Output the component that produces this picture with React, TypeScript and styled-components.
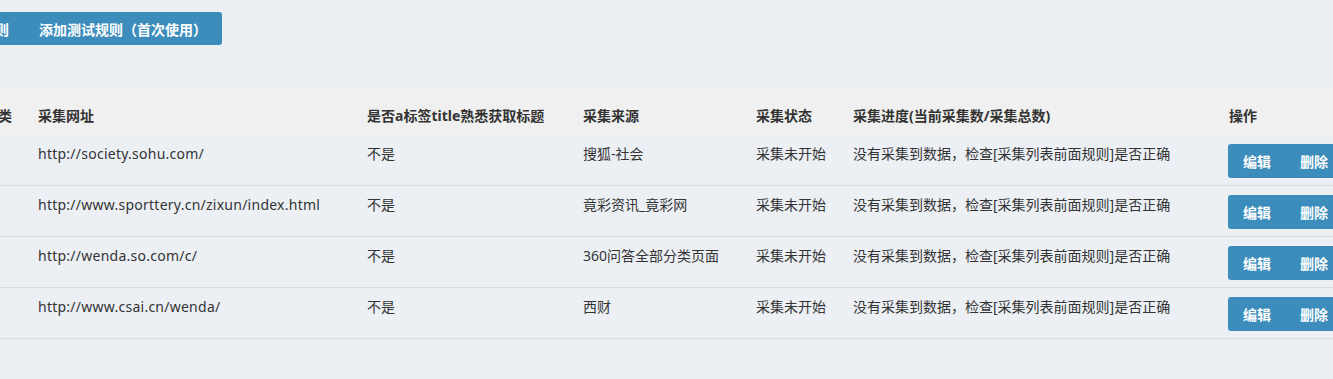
import React from 'react';
import styled, { createGlobalStyle } from 'styled-components';

interface Rule {
	id: number;
	url: string;
	useTitle: string;
	source: string;
	status: string;
	progress: string;
}

const rules: Rule[] = [
	{
		id: 1,
		url: 'http://society.sohu.com/',
		useTitle: '不是',
		source: '搜狐-社会',
		status: '采集未开始',
		progress: '没有采集到数据，检查[采集列表前面规则]是否正确',
	},
	{
		id: 2,
		url: 'http://www.sporttery.cn/zixun/index.html',
		useTitle: '不是',
		source: '竟彩资讯_竟彩网',
		status: '采集未开始',
		progress: '没有采集到数据，检查[采集列表前面规则]是否正确',
	},
	{
		id: 3,
		url: 'http://wenda.so.com/c/',
		useTitle: '不是',
		source: '360问答全部分类页面',
		status: '采集未开始',
		progress: '没有采集到数据，检查[采集列表前面规则]是否正确',
	},
	{
		id: 4,
		url: 'http://www.csai.cn/wenda/',
		useTitle: '不是',
		source: '西财',
		status: '采集未开始',
		progress: '没有采集到数据，检查[采集列表前面规则]是否正确',
	},
];

const GlobalStyle = createGlobalStyle`
	html, body {
		margin: 0;
		padding: 0;
		background: #ecf0f5;
	}
	body {
		font-family: 'Noto Sans', 'Noto Sans CJK SC', sans-serif;
		font-size: 14px;
		color: #333;
	}
`;

const App = () => {
	return (
		<>
			<GlobalStyle />
			<Viewport>
				<Sheet>
					<Toolbar>
						<ToolButton>新增采集规则</ToolButton>
						<ToolButton>添加测试规则（首次使用）</ToolButton>
					</Toolbar>
					<Table>
						<colgroup>
							<col style={{ width: 76 }} />
							<col style={{ width: 54 }} />
							<col style={{ width: 329 }} />
							<col style={{ width: 216 }} />
							<col style={{ width: 173 }} />
							<col style={{ width: 97 }} />
							<col style={{ width: 376 }} />
							<col style={{ width: 180 }} />
						</colgroup>
						<thead>
							<tr>
								<Th>ID</Th>
								<Th>分类</Th>
								<Th>采集网址</Th>
								<Th>是否a标签title熟悉获取标题</Th>
								<Th>采集来源</Th>
								<Th>采集状态</Th>
								<Th>采集进度(当前采集数/采集总数)</Th>
								<Th>操作</Th>
							</tr>
						</thead>
						<tbody>
							{rules.map((rule) => (
								<tr key={rule.id}>
									<Td>{rule.id}</Td>
									<Td />
									<Td $latin>{rule.url}</Td>
									<Td>{rule.useTitle}</Td>
									<Td>{rule.source}</Td>
									<Td>{rule.status}</Td>
									<Td>{rule.progress}</Td>
									<ActionTd>
										<ButtonArea>
											<ActionButton>编辑</ActionButton>
											<ActionButton>删除</ActionButton>
										</ButtonArea>
									</ActionTd>
								</tr>
							))}
						</tbody>
					</Table>
				</Sheet>
			</Viewport>
		</>
	);
};

export default App;

const Viewport = styled.div`
	width: 1333px;
	height: 379px;
	overflow: hidden;
`;

const Sheet = styled.div`
	margin-left: -100px;
	width: 1600px;
	padding-top: 12px;
`;

const Toolbar = styled.div`
	display: flex;
	padding-left: 10px;
	margin-bottom: 43px;
`;

const ToolButton = styled.button`
	height: 33px;
	padding: 0 15px;
	border: none;
	background-color: #3c8dbc;
	color: #fff;
	font-family: 'Noto Sans CJK SC', sans-serif;
	font-size: 14px;
	font-weight: 700;
	&:first-child {
		border-radius: 3px 0 0 3px;
	}
	&:last-child {
		border-radius: 0 3px 3px 0;
	}
`;

const Table = styled.table`
	table-layout: fixed;
	border-collapse: collapse;
	width: 1501px;
`;

const Th = styled.th`
	height: 38px;
	padding: 0 8px 8px;
	background-color: #f0f0f0;
	border-bottom: 1px solid #f4f5f7;
	vertical-align: bottom;
	text-align: left;
	line-height: 20px;
	font-weight: 700;
	white-space: nowrap;
	color: #333;
`;

const Td = styled.td<{ $latin?: boolean }>`
	padding: 9px 8px 7px;
	line-height: 20px;
	vertical-align: top;
	border-bottom: 1px solid #dadcdf;
	white-space: nowrap;
	color: #333;
	letter-spacing: ${(p) => (p.$latin ? '0.25px' : 'normal')};
`;

const ActionTd = styled(Td)`
	padding-left: 7px;
`;

const ButtonArea = styled.div`
	display: flex;
	height: 34px;
	border-radius: 3px;
	overflow: hidden;
`;

const ActionButton = styled.button`
	height: 34px;
	padding: 0 14px 0 15px;
	border: none;
	background-color: #3c8dbc;
	color: #fff;
	font-family: 'Noto Sans CJK SC', sans-serif;
	font-size: 14px;
	font-weight: 700;
`;
